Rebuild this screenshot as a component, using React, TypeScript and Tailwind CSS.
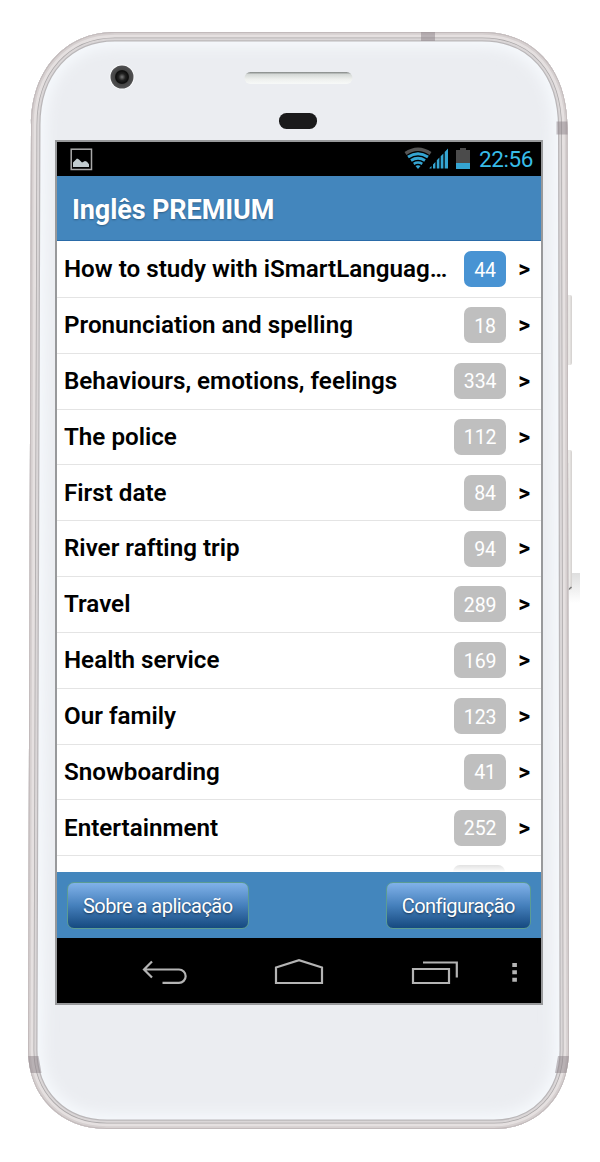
import React from 'react';
import clsx from 'clsx';

const lessons = [
  { title: 'How to study with iSmartLanguag…', count: 44, active: true },
  { title: 'Pronunciation and spelling', count: 18 },
  { title: 'Behaviours, emotions, feelings', count: 334 },
  { title: 'The police', count: 112 },
  { title: 'First date', count: 84 },
  { title: 'River rafting trip', count: 94 },
  { title: 'Travel', count: 289 },
  { title: 'Health service', count: 169 },
  { title: 'Our family', count: 123 },
  { title: 'Snowboarding', count: 41 },
  { title: 'Entertainment', count: 252 },
];

const BODY =
  'M115 32 H482 C535 32 567.5 70 567.5 128 L569 1050 C569 1096 538 1129 494 1129 H107 C60 1129 28 1096 28 1050 L31 125 C31 70 65 32 115 32 Z';

// Phone shell: the casing, its metal rim, antenna lines and side keys
function PhoneShell() {
  return (
    <svg className="absolute inset-0 -z-10" width="600" height="1162" viewBox="0 0 600 1162" fill="none">
      <defs>
        <clipPath id="body">
          <path d={BODY} />
        </clipPath>
        <filter id="soft" x="-5%" y="-5%" width="110%" height="110%">
          <feGaussianBlur stdDeviation="7" />
        </filter>
        <linearGradient id="key" x1="0" x2="1" y1="0" y2="0">
          <stop offset="0" stopColor="#c8c5c3" />
          <stop offset="0.5" stopColor="#efedeb" />
          <stop offset="1" stopColor="#d2cfcd" />
        </linearGradient>
        <linearGradient id="keyShadow" x1="0" x2="0" y1="0" y2="1">
          <stop offset="0" stopColor="#dedede" />
          <stop offset="1" stopColor="#ffffff" />
        </linearGradient>
        <linearGradient id="slot" x1="0" x2="0" y1="0" y2="1">
          <stop offset="0" stopColor="#7f8382" />
          <stop offset="0.2" stopColor="#d5d9d7" />
          <stop offset="0.6" stopColor="#eef0ee" />
          <stop offset="1" stopColor="#f7f9f8" />
        </linearGradient>
        <radialGradient id="lens">
          <stop offset="0" stopColor="#777" />
          <stop offset="0.3" stopColor="#222" />
          <stop offset="0.55" stopColor="#0c0c0c" />
          <stop offset="0.65" stopColor="#444" />
          <stop offset="1" stopColor="#515153" />
        </radialGradient>
      </defs>

      <rect x="567" y="573" width="13" height="30" fill="url(#keyShadow)" />
      <rect x="566" y="295" width="6" height="70" rx="2" fill="url(#key)" />
      <rect x="566" y="450" width="6" height="140" rx="2" fill="url(#key)" />
      <path d="M568 590 L571.5 587" stroke="#777" strokeWidth="1.5" />

      <g clipPath="url(#body)">
        <path d={BODY} fill="#ebedf1" />
        <path d={BODY} stroke="#f6f9fd" strokeWidth="30" filter="url(#soft)" />
        <path d={BODY} stroke="#bab7b9" strokeWidth="19" />
        <path d={BODY} stroke="#dad6d7" strokeWidth="16.5" />
        <path d={BODY} stroke="#aba8a9" strokeWidth="12.500" />
        <path d={BODY} stroke="#e5e0e0" strokeWidth="11" />
        <path d={BODY} stroke="#d6d0d0" strokeWidth="5.5" />
        <path d={BODY} stroke="#c2babb" strokeWidth="2" />
        <path d="M421 32 h14 v9 h-14 Z M556.5 121.500 h12 v13 h-12 Z" fill="#8c8187" fillOpacity="0.5" />
        <path d="M28 1056 h10.500 l3 17 h-12 Z M558 1056 h12 l-2 17 h-13 Z" fill="#8c8187" fillOpacity="0.5" />
      </g>

      <circle cx="122" cy="77" r="12.500" fill="#fafbfc" />
      <circle cx="122" cy="77" r="11.500" fill="url(#lens)" />
      <rect x="244.500" y="72" width="108" height="12" rx="6" fill="url(#slot)" />
      <rect x="279" y="113" width="38" height="16" rx="7.500" fill="#1a1a1b" />
    </svg>
  );
}

function StatusBar() {
  return (
    <div className="flex h-[34px] shrink-0 items-center bg-black pl-[13px] pr-2">
      <svg width="23" height="23" viewBox="0 0 23 23" fill="none">
        <rect x="1.2" y="1.2" width="20.300" height="20.300" stroke="#a9a9a9" strokeWidth="1.5" />
        <path d="M3 19 v-4.500 l4-4 2 1 3 3 3-1.500 2 .8 2 2.500 v2.700 Z" fill="#c2cccf" />
      </svg>
      <div className="ml-auto flex items-center">
        <svg width="66" height="24" viewBox="404 147 66 24" fill="none">
          <path d="M405.500 153.500 q12.500 -8.500 25 0" stroke="#555" strokeWidth="3.400" />
          <path d="M408 157 q10 -6.500 20 0" stroke="#35a5d2" strokeWidth="3" />
          <path d="M411 160.500 q7 -4.500 14 0" stroke="#35a5d2" strokeWidth="2.800" />
          <path d="M413.700 163.800 q4.300 -2.500 8.600 0" stroke="#35a5d2" strokeWidth="2.600" />
          <path d="M415.500 166 q2.500 -1.300 5 0 l-2.500 3 Z" fill="#35a5d2" />
          <path
            d="M429.500 168.500 h2 v-2.500 l-2 2 Z M433 168.500 h2.400 v-6.500 l-2.400 2.400 Z M436.800 168.500 h2.600 v-11 l-2.600 2.800 Z M440.700 168.500 h2.700 v-15 l-2.700 2.800 Z M444.700 168.500 h3.300 v-20 l-3.300 3.500 Z"
            fill="#35a5d2"
          />
          <path d="M456 150 h4 v-2 h6 v2 h4 v13 h-14 Z" fill="#4b4b4b" />
          <path d="M456 163 h14 v6 h-14 Z" fill="#35a5d2" />
        </svg>
        <span className="ml-[9px] mt-px text-[22.500px] leading-none tracking-[-0.4px] text-[#38bce8]">22:56</span>
      </div>
    </div>
  );
}

function FooterButton({ children }: { children: React.ReactNode }) {
  return (
    <button className="h-[47px] rounded-[7px] border border-[#5b9c93] bg-linear-to-b from-[#81b2e9] via-[#4580bc] to-[#154a80] px-[15px] pt-px text-[20px] tracking-[-0.52px] text-white [text-shadow:0_1px_2px_rgba(0,0,0,0.5)]">
      {children}
    </button>
  );
}

function NavBar() {
  return (
    <div className="h-[65px] shrink-0 bg-black">
      <svg width="484" height="65" viewBox="57 938 484 65" fill="none" stroke="#b4b4b4" strokeWidth="2.200">
        <path d="M152 961.500 L144 969.500 L152 977.500 M144 969.500 H179 A6.500 6.500 0 0 1 179 982.800 H162.500" />
        <path d="M276 983 V967.500 L299 960.200 L322 967.500 V983 Z" />
        <path d="M413 969 H449 V983 H413 Z M423 962.500 H456.800 V977.500" />
        <path d="M512.300 963 h4.600 v4 h-4.600 Z M512.300 970.300 h4.600 v4 h-4.600 Z M512.300 977.800 h4.600 v4 h-4.600 Z" fill="#b4b4b4" stroke="none" />
      </svg>
    </div>
  );
}

export default function App() {
  return (
    <div className="relative isolate h-[1162px] w-[600px] overflow-hidden bg-white pl-[55px] pt-[140px] font-[Roboto,sans-serif]">
      <PhoneShell />

      <div className="flex h-[865px] w-[488px] flex-col overflow-hidden border-2 border-[#98999b]">
        <StatusBar />

        <header className="flex h-[65px] shrink-0 items-center border-b border-b-[#2a6ba8] bg-[#4386bd] pl-[15px] pt-1">
          <h1 className="text-[27px] font-bold leading-none tracking-[-0.1px] text-white [text-shadow:0_1px_2px_rgba(0,0,0,0.3)]">
            Inglês PREMIUM
          </h1>
        </header>

        <ul className="min-h-0 flex-1 overflow-hidden bg-white pt-px">
          {lessons.map((lesson) => (
            <li
              key={lesson.title}
              className="flex h-[55.850px] items-center border-b border-[#e4e4e4] pl-[7px] pr-[11px]"
            >
              <span className="whitespace-nowrap text-[24.200px] font-semibold text-black">{lesson.title}</span>
              <span
                className={clsx(
                  'ml-auto flex h-9 items-center justify-center rounded-[7px] pt-0.5 text-[19.500px] text-white',
                  lesson.count > 99 ? 'w-[52px]' : 'w-[42px]',
                  lesson.active ? 'bg-[#4893d3]' : 'bg-[#bfbfbf]'
                )}
              >
                {lesson.count}
              </span>
              <span className="ml-[12px] mt-0.5 text-[23px] font-bold text-black">&gt;</span>
            </li>
          ))}
          {/* Next row, cut off by the footer */}
          <li className="flex justify-end pr-[36px] pt-[9px]">
            <span className="h-9 w-[52px] rounded-[7px] bg-linear-to-b from-[#e2e2e2] to-[#ffffff] to-20%" />
          </li>
        </ul>

        <footer className="flex h-[66px] shrink-0 items-center justify-between bg-[#4386bd] px-[10px]">
          <FooterButton>Sobre a aplicação</FooterButton>
          <FooterButton>Configuração</FooterButton>
        </footer>

        <NavBar />
      </div>
    </div>
  );
}
